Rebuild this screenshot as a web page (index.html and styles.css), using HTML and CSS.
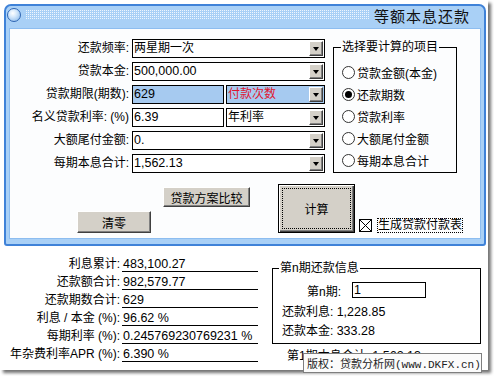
FILE: index.html
```html
<!DOCTYPE html>
<html lang="zh">
<head>
<meta charset="utf-8">
<title>等额本息还款</title>
<link rel="stylesheet" href="styles.css">
</head>
<body>
<div class="main">
  <div class="win">
    <div class="titlebar">
      <span class="orb"></span>
      <span class="dots"></span>
      <span class="title">等额本息还款</span>
    </div>
    <div class="wbody">
      <div class="top">
        <div class="fields">
          <div class="row">
            <span class="lbl">还款频率:</span>
            <div class="combo full"><span class="val">两星期一次</span><span class="arrow"></span></div>
          </div>
          <div class="row">
            <span class="lbl">贷款本金:</span>
            <div class="combo full"><span class="val num">500,000.00</span><span class="arrow"></span></div>
          </div>
          <div class="row">
            <span class="lbl">贷款期限(期数):</span>
            <div class="edit half-l sel"><span class="val num">629</span></div>
            <div class="combo half-r sel"><span class="val red">付款次数</span><span class="arrow"></span></div>
          </div>
          <div class="row">
            <span class="lbl">名义贷款利率: (%)</span>
            <div class="edit half-l"><span class="val num">6.39</span></div>
            <div class="combo half-r"><span class="val">年利率</span><span class="arrow"></span></div>
          </div>
          <div class="row">
            <span class="lbl">大额尾付金额:</span>
            <div class="combo full"><span class="val num">0.</span><span class="arrow"></span></div>
          </div>
          <div class="row">
            <span class="lbl">每期本息合计:</span>
            <div class="combo full"><span class="val num">1,562.13</span><span class="arrow"></span></div>
          </div>
        </div>
        <fieldset class="choice">
          <legend>选择要计算的项目</legend>
          <div class="opt"><span class="radio"></span>贷款金额(本金)</div>
          <div class="opt"><span class="radio on"><span class="dot"></span></span>还款期数</div>
          <div class="opt"><span class="radio"></span>贷款利率</div>
          <div class="opt"><span class="radio"></span>大额尾付金额</div>
          <div class="opt"><span class="radio"></span>每期本息合计</div>
        </fieldset>
      </div>
      <div class="actions">
        <div class="acol">
          <div class="btn btn-compare">贷款方案比较</div>
          <div class="btn btn-clear">清零</div>
        </div>
        <div class="btn-calc"><div class="focus">计算</div></div>
        <div class="gen">
          <svg class="chk" width="13" height="13" viewBox="0 0 13 13">
            <rect x="0.5" y="0.5" width="12" height="12" fill="#fff" stroke="#000"/>
            <path d="M1 1 L12 12 M12 1 L1 12" stroke="#000" stroke-width="1"/>
          </svg>
          <span class="genlbl">生成贷款付款表</span>
        </div>
      </div>
    </div>
  </div>

  <div class="results">
    <div class="stats">
      <div class="sl">利息累计:</div><div class="sv">483,100.27</div>
      <div class="sl">还款额合计:</div><div class="sv">982,579.77</div>
      <div class="sl">还款期数合计:</div><div class="sv">629</div>
      <div class="sl">利息 / 本金 (%):</div><div class="sv">96.62 %</div>
      <div class="sl">每期利率 (%):</div><div class="sv">0.245769230769231 %</div>
      <div class="sl">年杂费利率APR (%):</div><div class="sv">6.390 %</div>
    </div>
    <div class="nside">
      <fieldset class="nbox">
        <legend>第n期还款信息</legend>
        <div class="nrow"><span class="nlbl">第n期:</span><div class="edit nin"><span class="val num">1</span></div></div>
        <div class="nline first">还款利息: <span class="num">1,228.85</span></div>
        <div class="nline">还款本金: <span class="num">333.28</span></div>
      </fieldset>
      <div class="ntotal">第1期本息合计: <span class="num">1,562.13</span></div>
    </div>
  </div>

  <div class="tip">版权：贷款分析网<span class="mono">(www.DKFX.cn)</span></div>
</div>
</body>
</html>
```
FILE: styles.css
```css
html, body {
  margin: 0;
  padding: 0;
}
body {
  width: 494px;
  height: 376px;
  overflow: hidden;
  background: #fff;
  font-family: "Liberation Sans", "Noto Sans CJK SC", sans-serif;
  font-size: 12px;
  color: #000;
}
.main {
  position: relative;
  width: 488px;
  height: 370px;
  box-sizing: border-box;
  padding-top: 4px;
  background: #fff;
  box-shadow: 3px 3px 3px rgba(0, 0, 0, 0.55);
}

/* window */
.win {
  margin-left: 4px;
  width: 482px;
  box-sizing: border-box;
  border: 2px solid #3f82d8;
  border-radius: 7px 7px 3px 3px;
  background: #a9d0f6;
}
.titlebar {
  height: 19px;
  display: flex;
  align-items: flex-start;
  padding-left: 1px;
}
.orb {
  width: 14px;
  height: 14px;
  margin-top: 2px;
  box-sizing: border-box;
  border-radius: 50%;
  border: 1px solid #2f66b3;
  background: radial-gradient(circle at 40% 35%, #ffffff 0, #d6e9fb 35%, #7fb2e8 100%);
}
.dots {
  width: 344px;
  height: 9px;
  margin: 4px 0 0 5px;
  background-color: #eef6fe;
  background-image:
    linear-gradient(to right, transparent 1px, #a9d0f6 1px),
    linear-gradient(to bottom, transparent 1px, #a9d0f6 1px);
  background-size: 2px 2px;
}
.title {
  margin-left: auto;
  padding-right: 14px;
  font-family: "Noto Sans CJK SC", sans-serif;
  font-size: 15px;
  line-height: 19px;
  letter-spacing: 1px;
  color: #111;
}
.wbody {
  margin: 3px 3px 5px;
  height: 211px;
  box-sizing: border-box;
  border: 1px solid #8dbdf0;
  background: #fcfdfe;
  padding-top: 10px;
}
.top {
  display: flex;
  align-items: flex-start;
}
.fields {
  display: flex;
  flex-direction: column;
  gap: 4px;
  width: 315px;
}
.row {
  display: flex;
  align-items: center;
  height: 19px;
}
.lbl {
  width: 122px;
  padding-right: 3px;
  box-sizing: border-box;
  text-align: right;
  white-space: nowrap;
  line-height: 19px;
}
.combo, .edit {
  height: 19px;
  box-sizing: border-box;
  border: 1px solid #000;
  background: #fff;
  display: flex;
  align-items: center;
}
.full { width: 193px; }
.half-l { width: 92px; }
.half-r { width: 99px; margin-left: 2px; }
.sel { background: #a6caf0; }
.val {
  flex: 1;
  padding-left: 1px;
  line-height: 17px;
  white-space: nowrap;
  overflow: hidden;
}
.num {
  font-size: 12.5px;
}
.red { color: #e0142e; }
.arrow {
  width: 14px;
  height: 15px;
  margin-right: 1px;
  box-sizing: border-box;
  background: #d4d0c8;
  border: 1px solid;
  border-color: #fff #404040 #404040 #fff;
  box-shadow: inset -1px -1px #808080;
  display: flex;
  align-items: center;
  justify-content: center;
}
.arrow::after {
  content: "";
  width: 0;
  height: 0;
  margin-top: 1px;
  border-left: 3.5px solid transparent;
  border-right: 3.5px solid transparent;
  border-top: 4px solid #000;
}

/* choice group */
.choice {
  margin: 0 0 0 8px;
  padding: 6px 0 1px 7px;
  width: 124px;
  min-width: 0;
  box-sizing: border-box;
  border: 1px solid #000;
}
.choice legend, .nbox legend {
  padding: 0 1px;
  line-height: 16px;
  font-size: 12px;
}
.opt {
  display: flex;
  align-items: center;
  height: 22px;
  white-space: nowrap;
}
.radio {
  width: 13px;
  height: 13px;
  margin: 0 2px 0 1px;
  box-sizing: border-box;
  border: 1px solid #333;
  border-radius: 50%;
  background: #fff;
  display: grid;
  place-items: center;
}
.dot {
  width: 7px;
  height: 7px;
  border-radius: 50%;
  background: #000;
}

/* actions */
.actions {
  display: flex;
  align-items: flex-start;
  padding-top: 11px;
}
.acol {
  width: 240px;
  display: flex;
  flex-direction: column;
  align-items: flex-start;
}
.btn {
  box-sizing: border-box;
  background: #d4d0c8;
  border: 1px solid;
  border-color: #fff #404040 #404040 #fff;
  box-shadow: inset -1px -1px #808080;
  display: flex;
  align-items: center;
  justify-content: center;
  white-space: nowrap;
}
.btn-compare {
  margin: 3px 0 0 153px;
  width: 87px;
  height: 20px;
}
.btn-clear {
  margin: 4px 0 0 67px;
  width: 74px;
  height: 22px;
}
.btn-calc {
  margin-left: 28px;
  width: 77px;
  height: 49px;
  box-sizing: border-box;
  border: 1px solid #000;
  background: #d4d0c8;
  box-shadow: inset 1px 1px #fff, inset -1px -1px #404040, inset -2px -2px #808080;
  display: flex;
  padding: 3px;
}
.focus {
  flex: 1;
  border: 1px dotted #000;
  display: flex;
  align-items: center;
  justify-content: center;
}
.gen {
  margin: 34px 0 0 4px;
  display: flex;
  align-items: center;
}
.chk { display: block; }
.genlbl {
  margin-left: 5px;
  border: 1px dotted #000;
  line-height: 13px;
  white-space: nowrap;
}

/* results */
.results {
  display: flex;
  align-items: flex-start;
  padding-top: 11px;
}
.stats {
  display: grid;
  grid-template-columns: 120px 136px;
  column-gap: 2px;
  row-gap: 3px;
}
.sl {
  text-align: right;
  height: 15px;
  line-height: 14px;
  white-space: nowrap;
}
.sv {
  height: 15px;
  box-sizing: border-box;
  line-height: 14px;
  border-bottom: 1px solid #000;
  padding-left: 1px;
  white-space: nowrap;
  font-size: 12.5px;
}
.nside {
  margin: 3px 0 0 14px;
  width: 209px;
}
.nbox {
  margin: 0;
  padding: 0 0 4px 6px;
  min-width: 0;
  border: 1px solid #000;
}
.nrow {
  display: flex;
  align-items: center;
  margin-top: 6px;
  height: 16px;
}
.nlbl {
  margin-left: 28px;
  width: 45px;
  white-space: nowrap;
}
.nin {
  width: 74px;
  height: 16px;
}
.nin .val { line-height: 14px; }
.nline {
  margin: 3px 0 0 3px;
  line-height: 16px;
  white-space: nowrap;
}
.nline.first { margin-top: 6px; }
.ntotal {
  margin: 4px 0 0 15px;
  line-height: 16px;
  white-space: nowrap;
}
.tip {
  position: absolute;
  left: 303px;
  top: 353px;
  width: 179px;
  height: 20px;
  box-sizing: border-box;
  border: 1px solid #7f7f7f;
  background: #fbfbfb;
  padding-left: 3px;
  font-family: "Noto Sans CJK SC", sans-serif;
  font-size: 11px;
  line-height: 18px;
  color: #222;
  white-space: nowrap;
  overflow: hidden;
}
.mono {
  font-family: "Liberation Mono", monospace;
  font-size: 11px;
}
```
